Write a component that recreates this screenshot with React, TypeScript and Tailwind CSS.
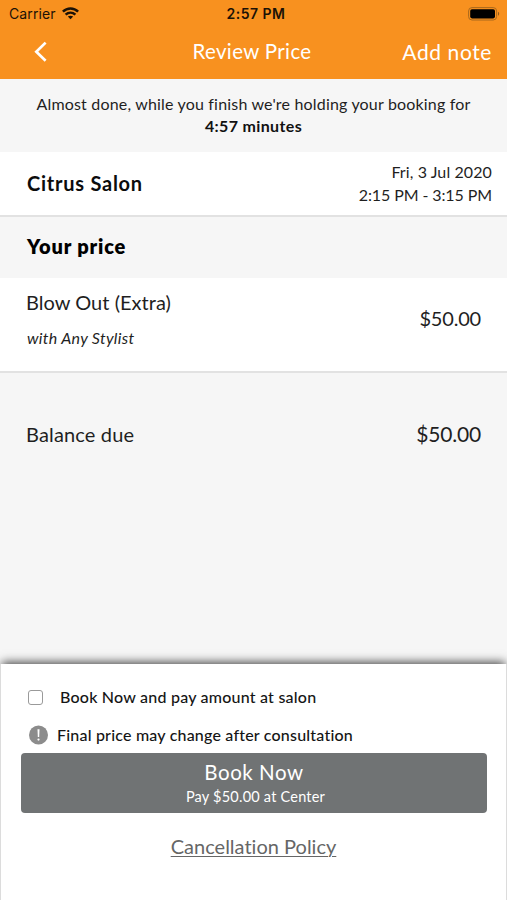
function WifiIcon() {
  return (
    <svg width="17" height="13" viewBox="0 0 17 13" fill="none" stroke="#1c1206" strokeWidth="2.5">
      <path d="M0.9 4.7C5.2 0.5 11.8 0.5 16.1 4.7" />
      <path d="M3.6 7.6C6.5 5 10.5 5 13.4 7.6" />
      <path d="M8.5 12.2L5.8 9.6C7.4 8.3 9.6 8.3 11.2 9.6Z" fill="#1c1206" stroke="none" />
    </svg>
  );
}

function BatteryIcon() {
  return (
    <svg width="32" height="14" viewBox="0 0 32 14" fill="none">
      <rect x="0.6" y="0.6" width="28" height="12.4" rx="3.4" stroke="#a8681c" />
      <rect x="2.2" y="2.2" width="24.8" height="9.2" rx="1.8" fill="#000" />
      <path d="M30 4.8C31.6 5.4 31.6 8.2 30 8.8Z" fill="#8f5a1c" />
    </svg>
  );
}

function Header() {
  return (
    <header className="h-[79px] bg-[#f8911f]">
      <div className="grid h-[27px] grid-cols-3 items-center pl-[9px] pr-[7px] font-['Inter',sans-serif] text-sm text-[#1c1206]">
        <div className="flex items-center gap-[6px]">
          <span className="tracking-[0.1px]">Carrier</span>
          <WifiIcon />
        </div>
        <span className="pl-[3px] text-center font-semibold tracking-[0.5px]">2:57 PM</span>
        <div className="flex justify-end">
          <BatteryIcon />
        </div>
      </div>
      <div className="grid h-[49px] grid-cols-[1fr_auto_1fr] items-center pl-[34px] pr-[15px] text-white">
        <svg width="14" height="21" viewBox="0 0 14 21" fill="none" stroke="#fff" strokeWidth="2.7">
          <path d="M11.6 1.6L2.3 10.7L11.6 19.8" />
        </svg>
        <h1 className="-ml-[22px] text-[20.5px] tracking-[0.35px]">Review Price</h1>
        <span className="text-right text-[21px] tracking-[0.6px]">Add note</span>
      </div>
    </header>
  );
}

function BookingSheet() {
  return (
    <section className="h-[236px] border-x border-[#dcdcdc] bg-white pt-[22px] shadow-[0_-4px_9px_-2px_rgba(0,0,0,0.7)]">
      <div className="flex h-[22px] items-center pl-[27px] text-base font-medium text-[#151515]">
        <span className="mt-px size-[15px] rounded-[3px] border-[1.5px] border-[#9a9a9a] bg-white" />
        <span className="ml-[17px] tracking-[0.22px]">Book Now and pay amount at salon</span>
      </div>
      <div className="mt-[16px] flex h-[22px] items-center pl-[27px] text-base font-medium text-[#151515]">
        <svg width="20" height="20" viewBox="0 0 20 20">
          <circle cx="10.5" cy="10" r="9.5" fill="#8c8c8c" />
          <path d="M9.5 4.2H11.5L11.2 12H9.8Z" fill="#fff" />
          <circle cx="10.5" cy="14.6" r="1.1" fill="#fff" />
        </svg>
        <span className="ml-[9px] tracking-[0.2px]">Final price may change after consultation</span>
      </div>
      <button className="ml-5 mt-[7px] flex h-[60px] w-[466px] flex-col items-center rounded-[4px] bg-[#707374] text-white">
        <span className="mt-[6px] text-[20.5px] leading-[26px] tracking-[0.55px]">Book Now</span>
        <span className="ml-[3px] mt-[2px] text-[14.5px] leading-5 tracking-[0.22px]">Pay $50.00 at Center</span>
      </button>
      <a className="mt-[20px] block text-center text-xl leading-[26px] tracking-[0.01px] text-[#666] underline decoration-1 underline-offset-2">
        Cancellation Policy
      </a>
    </section>
  );
}

export default function App() {
  return (
    <main className="flex h-[900px] w-[507px] flex-col overflow-hidden bg-[#f6f6f6] font-['Lato',sans-serif] text-[#1f1f1f]">
      <Header />
      <div className="flex h-[73px] flex-col items-center pt-[14px] text-base leading-[22px]">
        <p className="tracking-[0.18px]">Almost done, while you finish we're holding your booking for</p>
        <p className="font-bold tracking-[0.35px] text-[#111]">4:57 minutes</p>
      </div>
      <div className="flex h-[65px] items-center justify-between border-b-2 border-[#e2e2e2] bg-white pb-px pl-[27px] pr-[15px]">
        <h2 className="text-xl font-bold tracking-[0.75px] text-[#0c0c0c]">Citrus Salon</h2>
        <div className="pb-px text-right text-base leading-[23px]">
          <p className="tracking-[0.1px]">Fri, 3 Jul 2020</p>
          <p className="tracking-[-0.1px]">2:15 PM - 3:15 PM</p>
        </div>
      </div>
      <div className="flex h-[61px] items-center pb-[3px] pl-[27px]">
        <h2 className="text-xl font-extrabold tracking-[0.85px] text-black">Your price</h2>
      </div>
      <div className="flex h-[95px] items-start justify-between border-b-2 border-[#e2e2e2] bg-white pl-[26px] pr-[26px] pt-[11px]">
        <div className="flex flex-col gap-[12px]">
          <p className="text-xl leading-[26px] tracking-[0.03px]">Blow Out (Extra)</p>
          <p className="pl-px text-base italic leading-[22px] tracking-[0.3px]">with Any Stylist</p>
        </div>
        <span className="mt-[16px] text-xl leading-[26px] tracking-[-0.2px]">$50.00</span>
      </div>
      <div className="flex h-[125px] items-center justify-between pb-[3px] pl-[26px] pr-[26px]">
        <span className="text-xl tracking-[0.15px]">Balance due</span>
        <span className="text-[21px] tracking-[-0.2px]">$50.00</span>
      </div>
      <div className="mt-auto">
        <BookingSheet />
      </div>
    </main>
  );
}
